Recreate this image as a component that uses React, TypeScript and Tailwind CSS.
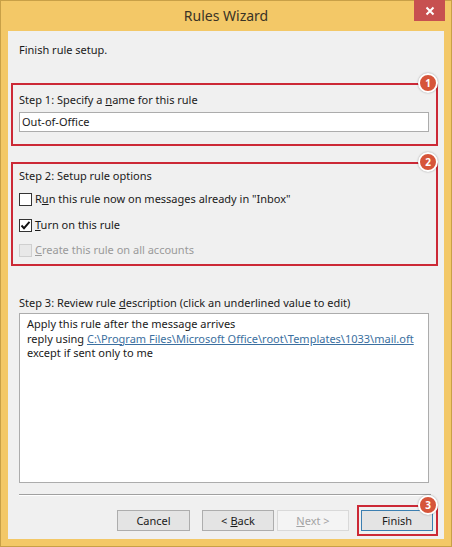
import React from "react";

const Badge: React.FC<{ n: number; className: string }> = ({ n, className }) => (
  <div
    className={`absolute flex h-[20px] w-[20px] items-center justify-center rounded-full border-2 border-white bg-[#d6553a] text-[10px] font-bold leading-none text-white shadow-[0_0_2px_rgba(0,0,0,0.35)] ${className}`}
  >
    {n}
  </div>
);

const Check: React.FC<{ checked?: boolean; disabled?: boolean; children: React.ReactNode }> = ({
  checked,
  disabled,
  children,
}) => (
  <div className="flex h-[16px] items-center">
    <div
      className={`flex h-[13px] w-[13px] items-center justify-center border ${
        disabled ? "border-[#cfcfcf] bg-[#e8e8e8]" : "border-[#333333] bg-white"
      }`}
    >
      {checked && (
        <svg width="11" height="11" viewBox="0 0 11 11">
          <path d="M1.5 5.5 L4 8.2 L9.5 1.8" fill="none" stroke="#111" strokeWidth="1.9" />
        </svg>
      )}
    </div>
    <span className={`ml-[3px] ${disabled ? "text-[#9a9a9a]" : "text-[#1a1a1a]"}`}>{children}</span>
  </div>
);

const Btn: React.FC<{ children: React.ReactNode; variant?: "default" | "disabled" | "primary"; className?: string }> = ({
  children,
  variant = "default",
  className = "",
}) => {
  const look =
    variant === "disabled"
      ? "border-[#d9d9d9] bg-[#f4f4f4] text-[#a3a3a3]"
      : variant === "primary"
      ? "border-[#3c7fb1] bg-[#e4e4e4] text-[#1a1a1a]"
      : "border-[#adadad] bg-[#e4e4e4] text-[#1a1a1a]";
  return (
    <div className={`flex h-[21px] w-[72px] items-center justify-center border ${look} ${className}`}>{children}</div>
  );
};

export default function App() {
  return (
    <div className="relative h-[547px] w-[452px] border border-[#c8a047] bg-[#f3c867] font-['Noto_Sans',sans-serif] text-[11px] leading-[16px] text-[#1a1a1a]">
      {/* title bar */}
      <div className="relative flex h-[30px] items-center justify-center">
        <span className="text-[14px] text-[#3a3326]">Rules Wizard</span>
        <div className="absolute right-[6px] top-[-1px] flex h-[21px] w-[31px] items-center justify-center bg-[#c75050]">
          <svg width="10" height="10" viewBox="0 0 10 10">
            <path d="M1.5 1.5 L8.5 8.5 M8.5 1.5 L1.5 8.5" stroke="#fff" strokeWidth="2" />
          </svg>
        </div>
      </div>

      {/* client area */}
      <div className="relative ml-[7px] mr-[7px] flex h-[508px] flex-col bg-[#f0f0f0]">
        <div className="pl-[11px] pt-[11px]">Finish rule setup.</div>

        {/* step 1 */}
        <div className="relative ml-[3px] mt-[25px] w-[427px] border-2 border-[#cc2936] pb-[12px] pl-[6px] pt-[7px]">
          <div>
            Step 1: Specify a <span className="underline">n</span>ame for this rule
          </div>
          <div className="mt-[4px] flex h-[20px] w-[410px] items-center border border-[#acacac] bg-white pl-[2px]">
            Out-of-Office
          </div>
          <Badge n={1} className="right-[-2px] top-[-12px]" />
        </div>

        {/* step 2 */}
        <div className="relative ml-[3px] mt-[16px] w-[427px] border-2 border-[#cc2936] pb-[6px] pl-[6px] pt-[4px]">
          <div>Step 2: Setup rule options</div>
          <div className="mt-[7px]">
            <Check>
              R<span className="underline">u</span>n this rule now on messages already in "Inbox"
            </Check>
          </div>
          <div className="mt-[10px]">
            <Check checked>
              <span className="underline">T</span>urn on this rule
            </Check>
          </div>
          <div className="mt-[9px]">
            <Check disabled>
              <span className="underline">C</span>reate this rule on all accounts
            </Check>
          </div>
          <Badge n={2} className="right-[-2px] top-[-12px]" />
        </div>

        {/* step 3 */}
        <div className="ml-[11px] mt-[29px]">
          Step 3: Review rule <span className="underline">d</span>escription (click an underlined value to edit)
        </div>
        <div className="ml-[11px] mt-[2px] h-[170px] w-[410px] whitespace-nowrap border border-[#acacac] bg-white pl-[7px] pt-[3px] leading-[14.5px]">
          <div>Apply this rule after the message arrives</div>
          <div>
            reply using{" "}
            <span className="text-[#3b6fa0] underline">C:\Program Files\Microsoft Office\root\Templates\1033\mail.oft</span>
          </div>
          <div>except if sent only to me</div>
        </div>

        {/* separator */}
        <div className="ml-[11px] mt-[11px] h-[2px] w-[412px] border-t border-[#a0a0a0] bg-white" />

        {/* buttons */}
        <div className="mt-[9px] flex items-center justify-end pr-[6px]">
          <Btn className="w-[73px]">Cancel</Btn>
          <Btn className="ml-[12px]">
            &lt; <span className="ml-[3px] underline">B</span>ack
          </Btn>
          <Btn variant="disabled" className="ml-[3px]">
            <span className="underline">N</span>ext &gt;
          </Btn>
          <div className="relative ml-[8px] flex h-[31px] w-[81px] items-center border-2 border-[#cc2936] pl-[2px]">
            <Btn variant="primary">Finish</Btn>
            <Badge n={3} className="right-[-2px] top-[-12px]" />
          </div>
        </div>
      </div>
    </div>
  );
}
